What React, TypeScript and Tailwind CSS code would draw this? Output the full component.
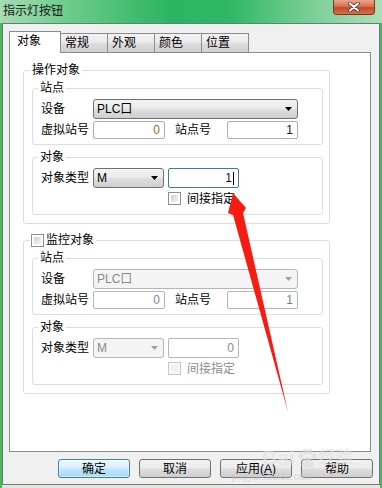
import React from "react";

function Arrow({ disabled }: { disabled?: boolean }) {
  return (
    <svg width="7" height="4" viewBox="0 0 7 4">
      <path d="M0 0H7L3.5 4Z" fill={disabled ? "#a0a0a0" : "#000"} />
    </svg>
  );
}

function Select({ text, w, disabled }: { text: string; w: string; disabled?: boolean }) {
  return (
    <div
      className={`flex items-center justify-between h-[20px] ${w} rounded-[3px] border pl-[3px] pr-[5px] ${
        disabled
          ? "border-[#b4b7ba] bg-[#f4f4f4] text-[#8a8a8a]"
          : "border-[#707070] bg-[linear-gradient(#f3f3f3,#ebebeb_45%,#dddddd_55%,#cfcfcf)] text-black"
      }`}
    >
      <span>{text}</span>
      <Arrow disabled={disabled} />
    </div>
  );
}

function Input({
  value,
  w,
  h,
  color,
  focused,
  disabled,
}: {
  value: string;
  w: string;
  h: string;
  color: string;
  focused?: boolean;
  disabled?: boolean;
}) {
  return (
    <div
      className={`flex items-center justify-end ${w} ${h} rounded-[2px] border bg-white pr-[4px] ${
        focused ? "border-[#3d7bad]" : disabled ? "border-[#b4b7ba]" : "border-[#abadb3]"
      } ${color}`}
    >
      <span>{value}</span>
      {focused ? <span className="ml-[1px] inline-block w-[1px] h-[13px] bg-black" /> : null}
    </div>
  );
}

function Checkbox({ disabled }: { disabled?: boolean }) {
  return (
    <span
      className={`inline-block box-border w-[13px] h-[13px] border p-[2px] ${
        disabled ? "border-[#c8c8c8] bg-[#f7f7f7]" : "border-[#8e8f8f] bg-white"
      }`}
    >
      <span
        className={`block w-full h-full ${
          disabled ? "bg-[#f0f0f0]" : "bg-[linear-gradient(135deg,#cfcfcf,#f6f6f6)]"
        }`}
      />
    </span>
  );
}

function SubGroup({ title, children }: { title: string; children: React.ReactNode }) {
  return (
    <fieldset className="w-[291px] rounded-[3px] border border-[#d5dfe5]">
      <legend className="ml-[5px] px-[2px] leading-[14px]">{title}</legend>
      <div className="pl-[8px] pt-[4px]">{children}</div>
    </fieldset>
  );
}

function Block({ disabled }: { disabled?: boolean }) {
  const d = !!disabled;
  return (
    <>
      <SubGroup title="站点">
        <div className="flex items-center h-[20px]">
          <span className="w-[52px]">设备</span>
          <Select text="PLC口" w="w-[205px]" disabled={d} />
        </div>
        <div className="flex items-center h-[18px] mt-[2px] mb-[5px]">
          <span className="w-[52px]">虚拟站号</span>
          <Input
            value="0"
            w="w-[72px]"
            h="h-[18px]"
            color={d ? "text-[#7d8b99]" : "text-[#9a6a2e]"}
            disabled={d}
          />
          <span className="ml-[10px] w-[52px]">站点号</span>
          <Input
            value="1"
            w="w-[71px]"
            h="h-[18px]"
            color={d ? "text-[#6f7f8f]" : "text-[#1a1030]"}
            disabled={d}
          />
        </div>
      </SubGroup>
      <div className="h-[5px]" />
      <SubGroup title="对象">
        <div className="flex items-center h-[20px]">
          <span className="w-[52px]">对象类型</span>
          <Select text="M" w="w-[71px]" disabled={d} />
          <div className="ml-[4px]">
            {d ? (
              <Input value="0" w="w-[71px]" h="h-[20px]" color="text-[#7d8b99]" disabled />
            ) : (
              <Input value="1" w="w-[71px]" h="h-[20px]" color="text-[#1a1030]" focused />
            )}
          </div>
        </div>
        <div className="flex items-center h-[13px] mt-[4px] mb-[9px] pl-[127px]">
          <Checkbox disabled={d} />
          <span className={`ml-[6px] ${d ? "text-[#8d8d8d]" : "text-black"}`}>间接指定</span>
        </div>
      </SubGroup>
    </>
  );
}

const btn =
  "flex h-[19px] w-[72px] items-center justify-center rounded-[3px] border border-[#707070] bg-[linear-gradient(#f2f2f2,#ebebeb_45%,#dddddd_55%,#cfcfcf)]";

export default function App() {
  return (
    <div className="relative w-[382px] h-[488px] overflow-hidden bg-[#48b95c] font-['Liberation_Sans','Noto_Sans_CJK_SC',sans-serif] text-[12px] leading-[14px] text-black">
      {/* title bar */}
      <div className="flex h-[23px] bg-[linear-gradient(90deg,#a6ddb5_0%,#6ccb8a_18%,#2bb461_45%,#2fb765_60%,#7ccf96_82%,#a9dfb8_100%)]">
        <span className="pl-[3px] pt-[4px] text-[#101810]">指示灯按钮</span>
        <div className="ml-auto mr-[7px] flex h-[15px] w-[42px] items-center justify-center rounded-b-[4px] border border-t-0 border-[#7a3424] bg-[linear-gradient(#e9a58e,#d77152_45%,#c04a26_55%,#d6714c)]">
          <svg width="12" height="10" viewBox="0 0 12 10">
            <path d="M2 1.5L10 8.5M10 1.5L2 8.5" stroke="#3a2a2a" strokeWidth="3.6" strokeLinecap="round" />
            <path d="M2 1.5L10 8.5M10 1.5L2 8.5" stroke="#ffffff" strokeWidth="2.2" strokeLinecap="round" />
          </svg>
        </div>
      </div>

      {/* body */}
      <div className="mx-[2px] h-[462px] border border-[#6f7880] bg-[#f0f0f0]">
        {/* tabs */}
        <div className="flex items-end pl-[6px] pt-[7px] h-[28px]">
          <div className="relative z-10 -mb-px h-[22px] w-[52px] border border-b-0 border-[#898c95] bg-white pl-[7px] pt-[2px]">
            对象
          </div>
          {["常规", "外观", "颜色", "位置"].map((t) => (
            <div
              key={t}
              className="-ml-px h-[19px] w-[48px] border border-b-0 border-[#898c95] bg-[linear-gradient(#f2f2f2,#ebebeb_45%,#dddddd_55%,#cfcfcf)] pl-[4px] pt-[2px]"
            >
              {t}
            </div>
          ))}
        </div>

        {/* panel */}
        <div className="ml-[6px] h-[400px] w-[362px] border border-[#898c95] bg-white pl-[13px] pt-[10px]">
          <fieldset className="w-[307px] rounded-[3px] border border-[#d5dfe5]">
            <legend className="ml-[6px] px-[2px] leading-[14px]">操作对象</legend>
            <div className="pl-[8px] pt-[4px] pb-[8px]">
              <Block />
            </div>
          </fieldset>

          <fieldset className="mt-[9px] w-[307px] rounded-[3px] border border-[#d5dfe5]">
            <legend className="ml-[6px] pl-[1px] pr-[2px] leading-[14px]">
              <span className="flex items-center gap-[2px]">
                <Checkbox />
                <span>监控对象</span>
              </span>
            </legend>
            <div className="pl-[8px] pt-[4px] pb-[8px]">
              <Block disabled />
            </div>
          </fieldset>
        </div>

        {/* buttons */}
        <div className="mt-[7px] flex justify-end gap-[9px] pr-[6px]">
          <div className="flex h-[19px] w-[72px] items-center justify-center rounded-[3px] border border-[#3c7fb1] bg-[linear-gradient(#eaf6fd,#d9f0fc_45%,#bee6fd_55%,#a7d9f5)] shadow-[inset_0_0_0_1px_#ffffff80]">
            确定
          </div>
          <div className={btn}>取消</div>
          <div className={btn}>
            应用(<span className="underline">A</span>)
          </div>
          <div className={btn}>帮助</div>
        </div>
      </div>
      <div className="mx-[2px] h-[3px] bg-[#dde8df]" />

      {/* watermark */}
      <div className="pointer-events-none absolute left-[262px] top-[447px] flex items-center text-[21px] leading-[22px] font-bold text-[#e2e2e2] opacity-60 font-['Liberation_Sans','Noto_Sans_CJK_SC',sans-serif]">
        <span>Bai</span>
        <svg width="22" height="22" viewBox="0 0 22 22" className="mx-[1px]">
          <g fill="#dcdcdc">
            <ellipse cx="5" cy="9" rx="2.4" ry="3" />
            <ellipse cx="9" cy="4.5" rx="2.4" ry="3" />
            <ellipse cx="14" cy="4.5" rx="2.4" ry="3" />
            <ellipse cx="18" cy="9" rx="2.4" ry="3" />
            <path d="M11.5 10c-3 0-6 5-6 8 0 2 2 3 3 3 1.5 0 2-1 3-1s1.5 1 3 1c1 0 3-1 3-3 0-3-3-8-6-8z" />
          </g>
        </svg>
        <span className="text-[17px]">经验</span>
      </div>
      <div className="pointer-events-none absolute left-[232px] top-[471px] text-[10px] leading-[11px] text-[#cdcdcd] opacity-70">
        jingyan.baidu.com
      </div>

      {/* red arrow annotation */}
      <svg className="pointer-events-none absolute left-0 top-0" width="382" height="488" viewBox="0 0 382 488">
        <polygon points="233,193 246,208 243,213 288,412 233,215 228,213" fill="#f51c12" />
      </svg>
    </div>
  );
}
